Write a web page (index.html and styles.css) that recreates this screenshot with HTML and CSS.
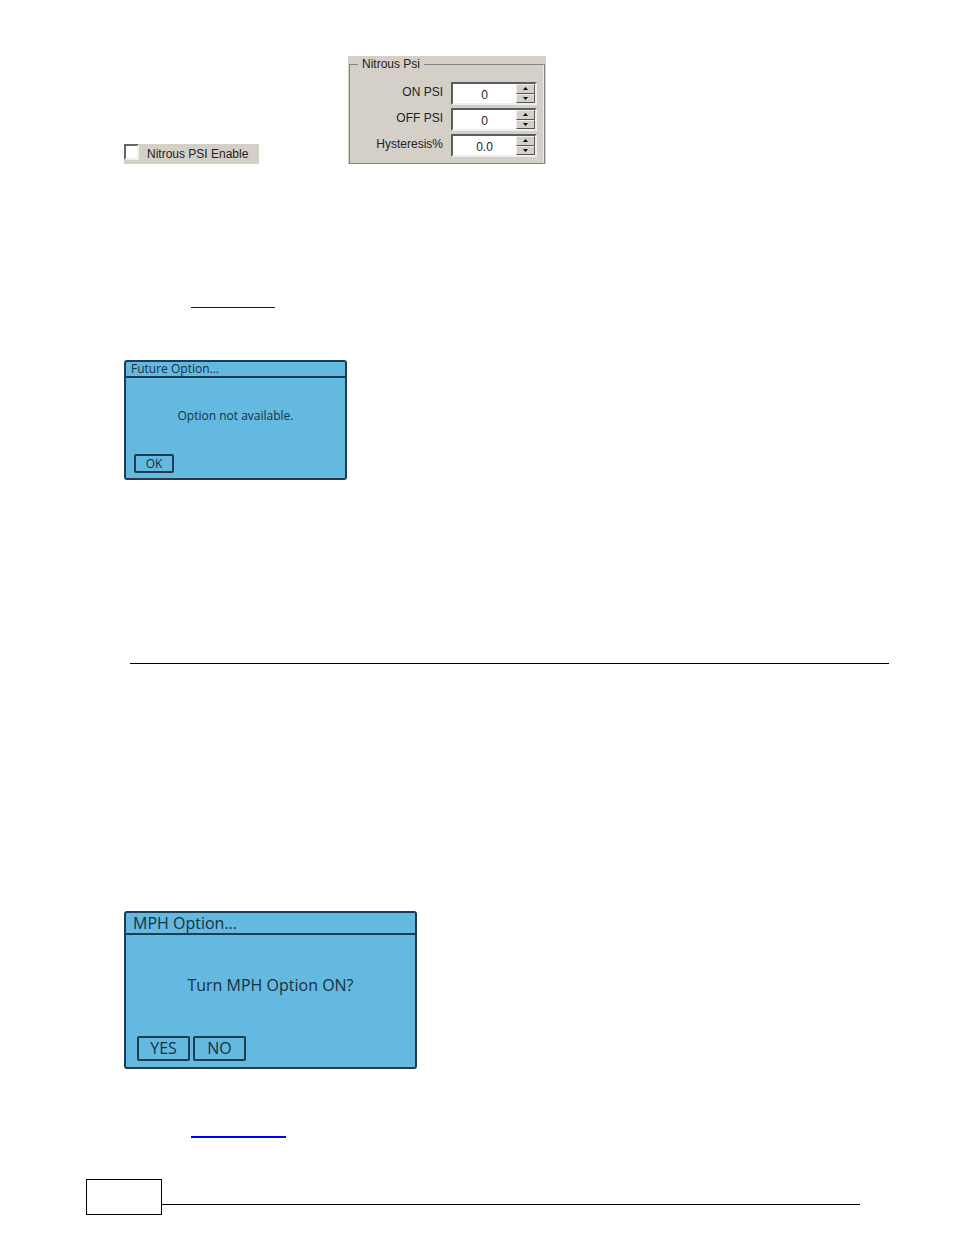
FILE: index.html
```
<!DOCTYPE html>
<html lang="en">
<head>
  <meta charset="UTF-8">
  <title>Nitrous PSI</title>
  <link rel="stylesheet" href="styles.css">
</head>
<body>

  <main class="content">
    <!-- Nitrous settings -->
    <section class="settings">
      <label class="enable"><input type="checkbox" class="enable-box">Nitrous PSI Enable</label>

      <div class="panel">
        <fieldset class="group">
          <legend>Nitrous Psi</legend>
          <div class="field">
            <label for="onPsi">ON PSI</label>
            <div class="spinner">
              <input type="text" id="onPsi" value="0">
              <div class="steps">
                <button type="button"><svg viewBox="0 0 10 6"><path d="M0 6L5 0L10 6z"/></svg></button>
                <button type="button"><svg viewBox="0 0 10 6"><path d="M0 0L5 6L10 0z"/></svg></button>
              </div>
            </div>
          </div>
          <div class="field">
            <label for="offPsi">OFF PSI</label>
            <div class="spinner">
              <input type="text" id="offPsi" value="0">
              <div class="steps">
                <button type="button"><svg viewBox="0 0 10 6"><path d="M0 6L5 0L10 6z"/></svg></button>
                <button type="button"><svg viewBox="0 0 10 6"><path d="M0 0L5 6L10 0z"/></svg></button>
              </div>
            </div>
          </div>
          <div class="field">
            <label for="hysteresis">Hysteresis%</label>
            <div class="spinner">
              <input type="text" id="hysteresis" value="0.0">
              <div class="steps">
                <button type="button"><svg viewBox="0 0 10 6"><path d="M0 6L5 0L10 6z"/></svg></button>
                <button type="button"><svg viewBox="0 0 10 6"><path d="M0 0L5 6L10 0z"/></svg></button>
              </div>
            </div>
          </div>
        </fieldset>
      </div>
    </section>

    <a class="ref ref-future" href="#future"></a>

    <!-- Handheld screens -->
    <section class="screen screen-small" id="future">
      <h2>Future Option...</h2>
      <p>Option not available.</p>
      <div class="keys">
        <button type="button">OK</button>
      </div>
    </section>

    <hr class="rule">

    <section class="screen screen-large" id="mph">
      <h2>MPH Option...</h2>
      <p>Turn MPH Option ON?</p>
      <div class="keys">
        <button type="button">YES</button>
        <button type="button">NO</button>
      </div>
    </section>

    <a class="ref ref-mph" href="#mph"></a>
  </main>

  <footer class="footer">
    <div class="page-box"></div>
    <div class="footer-line"></div>
  </footer>

</body>
</html>
```
FILE: styles.css
```
* {
  box-sizing: border-box;
}

body {
  margin: 0;
  background-color: white;
  color: #222;
  font-family: "Liberation Sans", Arial, sans-serif;
  font-size: 12px;
}

.content {
  padding: 56px 65px 0 124px;
}

.settings {
  display: flex;
  align-items: flex-end;
  gap: 89px;
}

.enable {
  display: flex;
  align-items: center;
  gap: 8px;
  width: 135px;
  height: 20px;
  background-color: #d4d0c8;
  white-space: nowrap;
}

.enable-box {
  appearance: none;
  align-self: flex-start;
  width: 15px;
  height: 16px;
  margin: 0;
  background-color: white;
  border: 2px solid;
  border-color: #666 #eee #eee #666;
}

.enable-box:checked {
  background-color: #444;
}

.panel {
  width: 198px;
  height: 108px;
  padding: 1px 1px 0;
  background-color: #d4d0c8;
}

.group {
  height: 107px;
  margin: 0;
  padding: 10px 7px 0 4px;
  border: 1px solid #858585;
  box-shadow: inset -1px 0 #eee;
}

.group legend {
  margin-left: 4px;
  padding: 0 4px;
  line-height: 15px;
}

.field {
  display: flex;
  justify-content: flex-end;
  gap: 8px;
  height: 23px;
  margin-bottom: 3px;
}

.field label {
  line-height: 20px;
}

.spinner {
  display: flex;
  width: 86px;
  background-color: white;
  border: 2px solid;
  border-color: #5c5c5c #eee #eee #5c5c5c;
}

.spinner input {
  flex: 1;
  min-width: 0;
  padding: 2px 0 0;
  border: none;
  background: none;
  color: #222;
  font: inherit;
  text-align: center;
}

.steps {
  display: flex;
  flex-direction: column;
  width: 19px;
}

.steps button {
  display: flex;
  flex: 1;
  align-items: center;
  justify-content: center;
  min-height: 0;
  padding: 0;
  background-color: #d4d0c8;
  border: 1px solid;
  border-color: #eee #555 #555 #eee;
}

.steps svg {
  display: block;
  width: 5px;
  height: 3px;
}

/* underlined references */
.ref {
  display: block;
  margin-left: 67px;
}

.ref-future {
  width: 84px;
  margin-top: 143px;
  border-bottom: 1px solid #00f;
}

.ref-mph {
  width: 95px;
  margin-top: 67px;
  border-bottom: 2px solid #00f;
}

.screen {
  display: flex;
  flex-direction: column;
  background-color: #64b9e0;
  border: 2px solid #1f3d4e;
  border-radius: 3px;
  color: #17303f;
  font-family: "Open Sans", "Noto Sans", sans-serif;
  font-weight: 500;
}

.screen h2 {
  margin: 0;
  border-bottom: 2px solid #1f3d4e;
  font-weight: 500;
}

.screen p {
  margin: 0;
  text-align: center;
}

.keys {
  display: flex;
  margin-top: auto;
}

.keys button {
  padding: 0;
  background: none;
  border: 2px solid #1f3d4e;
  border-radius: 2px;
  color: inherit;
  font: inherit;
}

.screen-small {
  width: 223px;
  height: 120px;
  margin-top: 52px;
  font-size: 12px;
}

.screen-small h2 {
  padding-left: 5px;
  font-size: 12px;
  line-height: 14px;
}

.screen-small p {
  padding-top: 28px;
  line-height: 20px;
}

.screen-small .keys {
  padding: 0 0 5px 8px;
}

.screen-small .keys button {
  width: 40px;
  height: 19px;
  line-height: 15px;
}

.rule {
  height: 1px;
  margin: 183px 0 0 6px;
  border: none;
  background-color: black;
}

.screen-large {
  width: 293px;
  height: 158px;
  margin-top: 247px;
  font-size: 16px;
}

.screen-large h2 {
  padding-left: 7px;
  font-size: 16px;
  line-height: 20px;
}

.screen-large p {
  padding-top: 38px;
  line-height: 24px;
}

.screen-large .keys {
  gap: 3px;
  padding: 0 0 6px 11px;
}

.screen-large .keys button {
  width: 53px;
  height: 25px;
  line-height: 21px;
}

.footer {
  display: flex;
  align-items: flex-end;
  padding: 41px 94px 20px 86px;
}

.page-box {
  width: 76px;
  height: 36px;
  border: 1px solid black;
}

.footer-line {
  flex: 1;
  height: 1px;
  margin-bottom: 10px;
  background-color: black;
}
```
